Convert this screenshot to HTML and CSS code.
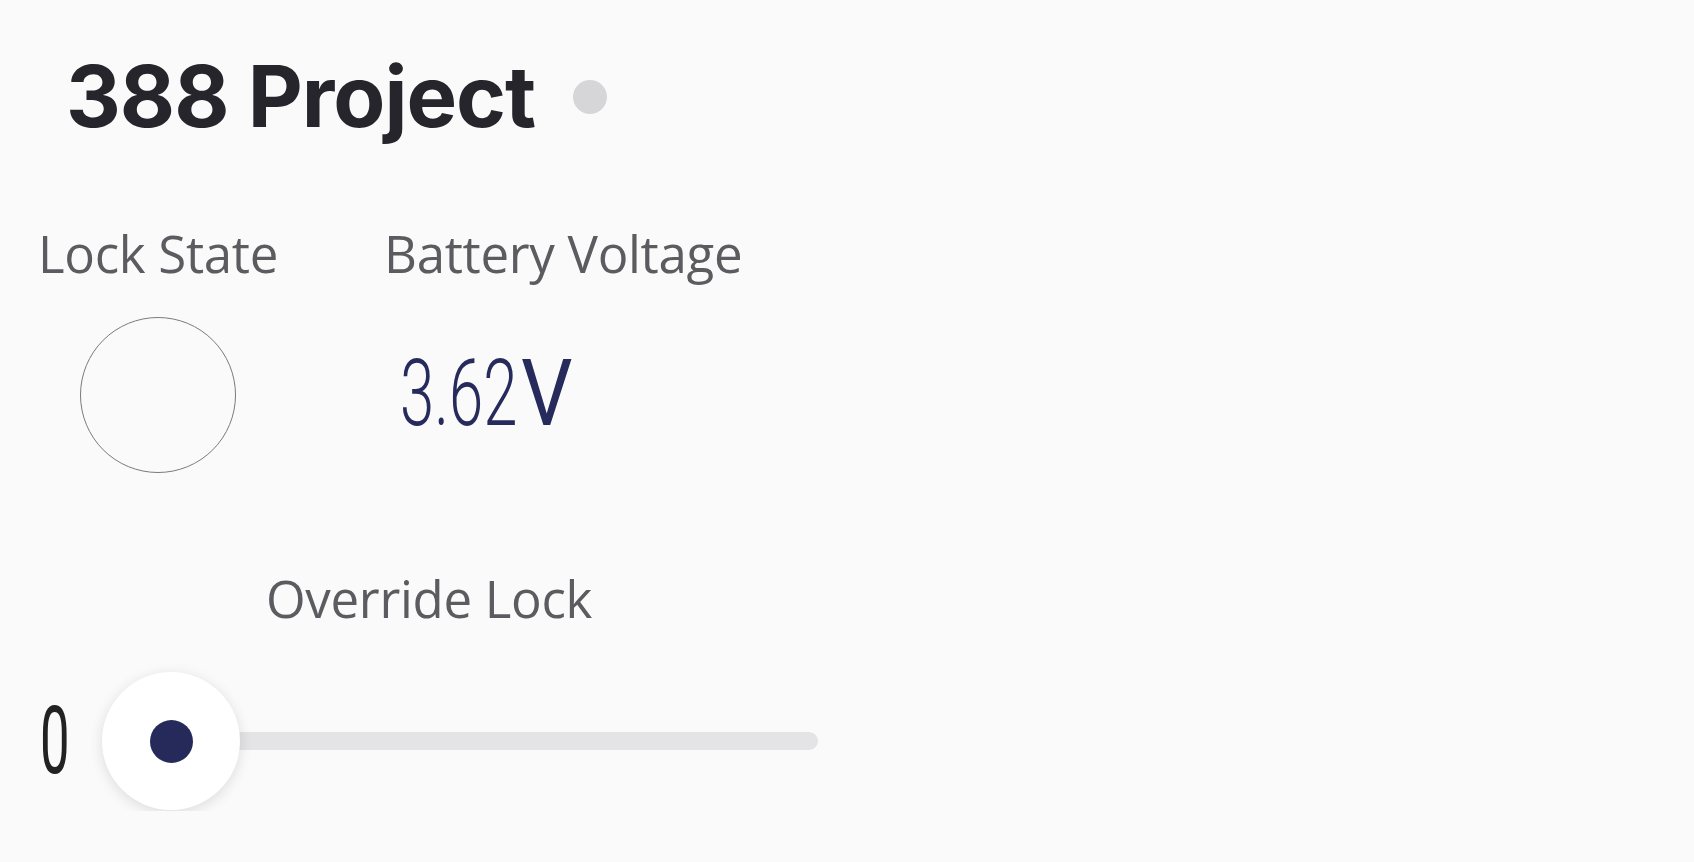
FILE: index.html
```html
<!DOCTYPE html>
<html lang="en">
<head>
<meta charset="utf-8">
<title>388 Project</title>
<link rel="stylesheet" href="styles.css">
</head>
<body>
<main class="dash">
  <header class="head">
    <h1 class="title">388 Project</h1>
    <span class="status-dot"></span>
  </header>
  <section class="row">
    <div class="widget lock">
      <div class="label">Lock State</div>
      <div class="led"></div>
    </div>
    <div class="widget volt">
      <div class="label">Battery Voltage</div>
      <div class="value"><span class="num">3.62</span><span class="unit">V</span></div>
    </div>
  </section>
  <section class="slider-widget">
    <div class="label center">Override Lock</div>
    <div class="slider">
      <span class="min"><span class="cond">0</span></span>
      <div class="track-wrap">
        <div class="track"></div>
        <div class="thumb"><span class="knob-dot"></span></div>
      </div>
    </div>
  </section>
</main>
</body>
</html>
```

FILE: styles.css
```css
html, body {
  margin: 0;
  padding: 0;
  background: #fafafa;
}
.dash {
  width: 840px;
}
.head {
  display: flex;
  align-items: center;
  padding: 47px 0 0 66px;
}
.title {
  margin: 0;
  font-family: Inter, "Liberation Sans", sans-serif;
  font-weight: 700;
  font-size: 85px;
  line-height: 100px;
  color: #26252b;
  letter-spacing: -1px;
}
.status-dot {
  width: 34px;
  height: 34px;
  border-radius: 50%;
  background: #d6d6d9;
  margin-left: 38px;
}
.label {
  font-family: "Open Sans", "Noto Sans", sans-serif;
  font-size: 51px;
  line-height: 60px;
  color: #5b5b60;
  white-space: nowrap;
  letter-spacing: -0.3px;
}
.row {
  display: flex;
  padding: 76px 0 0 36px;
}
.widget {
  display: flex;
  flex-direction: column;
}
.lock {
  width: 244px;
  align-items: center;
}
.led {
  width: 154px;
  height: 154px;
  border: 1.5px solid #7a7a7c;
  border-radius: 50%;
  margin-top: 34px;
}
.volt {
  margin-left: 104px;
}
.value {
  margin-top: 65px;
  padding-left: 16px;
  color: #262b5c;
  line-height: 92px;
  white-space: nowrap;
}
.num {
  font-family: Roboto, "Liberation Sans", sans-serif;
  font-weight: 300;
  font-size: 92px;
  display: inline-block;
  transform: scaleX(0.67);
  transform-origin: left center;
  width: 121px;
}
.unit {
  font-family: Roboto, "Liberation Sans", sans-serif;
  font-weight: 400;
  font-size: 92px;
  display: inline-block;
  transform: scaleX(0.88);
  transform-origin: left center;
}
.slider-widget {
  display: flex;
  flex-direction: column;
  padding: 95px 0 0 40px;
  width: 778px;
}
.center {
  align-self: center;
}
.slider {
  display: flex;
  align-items: center;
  margin-top: 43px;
  height: 140px;
}
.min {
  width: 62px;
  color: #222;
  font-family: Roboto, "Liberation Sans", sans-serif;
  font-weight: 400;
  font-size: 94px;
  line-height: 92px;
}
.cond {
  display: inline-block;
  transform: scaleX(0.56);
  transform-origin: left center;
}
.track-wrap {
  flex: 1;
  position: relative;
  height: 140px;
  display: flex;
  align-items: center;
}
.track {
  width: 100%;
  height: 18px;
  border-radius: 9px;
  background: #e4e4e7;
}
.thumb {
  position: absolute;
  left: 0;
  top: 1px;
  width: 138px;
  height: 138px;
  border-radius: 50%;
  background: #fff;
  box-shadow: 0 3px 14px rgba(0, 0, 0, 0.12);
  display: flex;
  align-items: center;
  justify-content: center;
}
.knob-dot {
  width: 43px;
  height: 43px;
  border-radius: 50%;
  background: #252a5b;
}
```
